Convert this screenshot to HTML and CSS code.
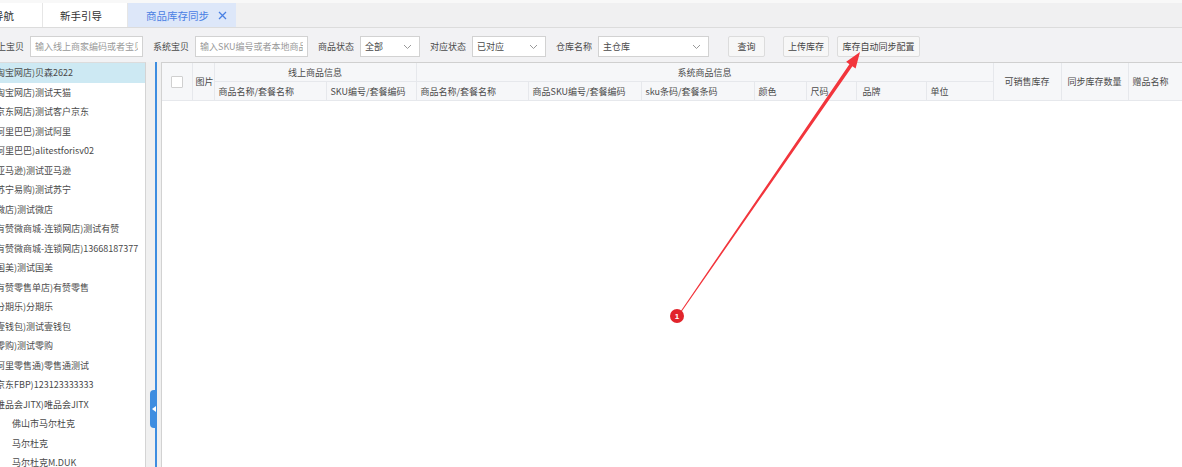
FILE: index.html
```html
<!DOCTYPE html>
<html lang="zh-CN">
<head>
  <meta charset="UTF-8" />
  <title>商品库存同步</title>
  <link rel="stylesheet" href="styles.css">
</head>
<body>
  <div class="tabs">
    <div class="tab tab-home">导航</div>
    <div class="tab tab-guide">新手引导</div>
    <div class="tab active">商品库存同步
      <svg class="close" width="9" height="9" viewBox="0 0 9 9"><path d="M1 1L8 8M8 1L1 8" stroke="#4a80e3" stroke-width="1.3" fill="none"/></svg>
    </div>
  </div>

  <div class="toolbar">
    <div class="field first">
      <span class="lbl">线上宝贝</span>
      <input class="txt" placeholder="输入线上商家编码或者宝贝名称">
    </div>
    <div class="field">
      <span class="lbl">系统宝贝</span>
      <input class="txt" placeholder="输入SKU编号或者本地商品名称">
    </div>
    <div class="field">
      <span class="lbl">商品状态</span>
      <div class="select w-sm"><span>全部</span><svg width="9" height="6" viewBox="0 0 9 6"><path d="M1 1L4.5 4.5L8 1" stroke="#999" fill="none"/></svg></div>
    </div>
    <div class="field">
      <span class="lbl">对应状态</span>
      <div class="select w-md"><span>已对应</span><svg width="9" height="6" viewBox="0 0 9 6"><path d="M1 1L4.5 4.5L8 1" stroke="#999" fill="none"/></svg></div>
    </div>
    <div class="field">
      <span class="lbl">仓库名称</span>
      <div class="select w-lg"><span>主仓库</span><svg width="9" height="6" viewBox="0 0 9 6"><path d="M1 1L4.5 4.5L8 1" stroke="#999" fill="none"/></svg></div>
    </div>
    <button class="btn btn-query">查询</button>
    <button class="btn btn-upload">上传库存</button>
    <button class="btn btn-config">库存自动同步配置</button>
  </div>

  <div class="main">
    <ul class="shops">
      <li class="shop on">(淘宝网店)贝森2622</li>
      <li class="shop">(淘宝网店)测试天猫</li>
      <li class="shop">(京东网店)测试客户京东</li>
      <li class="shop">(阿里巴巴)测试阿里</li>
      <li class="shop">(阿里巴巴)alitestforisv02</li>
      <li class="shop">(亚马逊)测试亚马逊</li>
      <li class="shop">(苏宁易购)测试苏宁</li>
      <li class="shop">(微店)测试微店</li>
      <li class="shop">(有赞微商城-连锁网店)测试有赞</li>
      <li class="shop">(有赞微商城-连锁网店)13668187377</li>
      <li class="shop">(国美)测试国美</li>
      <li class="shop">(有赞零售单店)有赞零售</li>
      <li class="shop">(分期乐)分期乐</li>
      <li class="shop">(壹钱包)测试壹钱包</li>
      <li class="shop">(零购)测试零购</li>
      <li class="shop">(阿里零售通)零售通测试</li>
      <li class="shop">(京东FBP)123123333333</li>
      <li class="shop">(唯品会JITX)唯品会JITX</li>
      <li class="shop sub">佛山市马尔杜克</li>
      <li class="shop sub">马尔杜克</li>
      <li class="shop sub">马尔杜克M.DUK</li>
    </ul>

    <div class="splitter">
      <div class="collapse"><svg width="4" height="6" viewBox="0 0 4 6"><path d="M4 0L0 3L4 6Z" fill="#fff"/></svg></div>
    </div>

    <div class="grid">
      <table>
        <colgroup>
          <col style="width:30px"><col style="width:22px">
          <col style="width:112px"><col style="width:90px">
          <col style="width:112px"><col style="width:113px"><col style="width:113px">
          <col style="width:52px"><col style="width:50px"><col style="width:70px"><col style="width:67px">
          <col style="width:68px"><col style="width:67px"><col style="width:80px">
        </colgroup>
        <tr>
          <th rowspan="2" class="chk"><span class="box"></span></th>
          <th rowspan="2" class="pic">图片</th>
          <th colspan="2" class="group">线上商品信息</th>
          <th colspan="7" class="group">系统商品信息</th>
          <th rowspan="2" class="mid">可销售库存</th>
          <th rowspan="2" class="mid">同步库存数量</th>
          <th rowspan="2">赠品名称</th>
        </tr>
        <tr>
          <th>商品名称/套餐名称</th>
          <th>SKU编号/套餐编码</th>
          <th>商品名称/套餐名称</th>
          <th>商品SKU编号/套餐编码</th>
          <th>sku条码/套餐条码</th>
          <th>颜色</th>
          <th>尺码</th>
          <th class="wide">品牌</th>
          <th>单位</th>
        </tr>
      </table>
    </div>
  </div>

  <svg class="annot" width="1182" height="467" viewBox="0 0 1182 467">
    <polygon points="678.4,316.3 852.4,66.2 855.6,68.6 860,52 846.2,61.8 849.4,64.2 677.6,315.7" fill="#f2353c"/>
    <circle cx="677" cy="316" r="7" fill="#e1242b"/>
    <text x="677" y="319" text-anchor="middle" font-size="8" font-weight="bold" fill="#fff" font-family="Liberation Sans, sans-serif">1</text>
  </svg>
</body>
</html>
```

FILE: styles.css
```css
body {
  margin: 0;
  height: 467px;
  overflow: hidden;
  position: relative;
  font-family: "Noto Sans CJK SC", "Noto Sans", sans-serif;
  font-size: 9px;
  color: #4a4a4a;
  background-color: #fff;
}

/* tab bar */
.tabs {
  display: flex;
  height: 24px;
  border-top: 3px solid #f8f8f8;
  border-bottom: 1px solid #dcdcdc;
  background-color: #f0f0f1;
}

.tab {
  display: flex;
  align-items: center;
  background-color: #fff;
  border-right: 1px solid #e6e6e6;
  font-size: 10.5px;
  color: #333;
  white-space: nowrap;
}

.tab-home {
  margin-left: -8px;
  padding: 0 28px 0 1px;
}

.tab-guide {
  padding: 0 25px 0 17px;
}

.tab.active {
  padding: 0 9px 0 18px;
  background-color: #dde7f9;
  color: #4a80e3;
  border-right: none;
}

.close {
  margin-left: 9px;
}

/* search bar */
.toolbar {
  display: flex;
  align-items: flex-start;
  height: 34px;
  padding-top: 8px;
  box-sizing: border-box;
  background-color: #f2f2f4;
}

.field {
  display: flex;
  align-items: center;
  gap: 6px;
  margin-right: 10px;
}

.field.first {
  margin-left: -12px;
}

.lbl {
  line-height: 21px;
  white-space: nowrap;
}

.txt {
  width: 113px;
  height: 21px;
  box-sizing: border-box;
  border: 1px solid #d2d2d2;
  padding: 0 4px;
  font-family: inherit;
  font-size: 9px;
  color: #333;
  background-color: #fff;
  outline: none;
}

.txt::placeholder {
  color: #999;
}

.select {
  display: flex;
  align-items: center;
  justify-content: space-between;
  height: 21px;
  box-sizing: border-box;
  border: 1px solid #d2d2d2;
  padding: 0 7px 0 4px;
  background-color: #fff;
}

.w-sm { width: 60px; }
.w-md { width: 74px; }
.w-lg { width: 111px; }

.btn {
  height: 21px;
  box-sizing: border-box;
  border: 1px solid #dcdcdc;
  border-radius: 2px;
  background-color: #f7f7f7;
  font-family: inherit;
  font-size: 9px;
  color: #444;
  padding: 0;
}

.btn-query { width: 37px; margin-left: 9px; }
.btn-upload { width: 46px; margin-left: 18px; }
.btn-config { width: 83px; margin-left: 8px; }

/* content */
.main {
  display: flex;
  height: 405px;
}

.shops {
  list-style: none;
  margin: 0;
  padding: 0;
  width: 146px;
  flex-shrink: 0;
  box-sizing: border-box;
  border-top: 1px solid #dcdcdc;
  border-right: 1px solid #d4d4d4;
  background-color: #fff;
}

.shop {
  height: 19.5px;
  line-height: 19.5px;
  white-space: nowrap;
  overflow: hidden;
  text-indent: -7px;
}

.shop.on {
  background-color: #cde9f3;
}

.shop.sub {
  text-indent: 12px;
}

.splitter {
  width: 15px;
  flex-shrink: 0;
  position: relative;
  background: linear-gradient(to right, #f0f0f0 9px, #3d8de0 9px, #3d8de0 11px, #f0f0f0 11px);
}

.collapse {
  position: absolute;
  left: 4px;
  top: 328px;
  width: 7px;
  height: 38px;
  border-radius: 4px 0 0 4px;
  background-color: #3d8de0;
  display: flex;
  align-items: center;
  justify-content: center;
}

.grid {
  flex: 1;
  overflow: hidden;
  border-top: 1px solid #d0d0d0;
  border-left: 1px solid #d2d2d2;
  background-color: #fff;
}

.grid table {
  border-collapse: collapse;
  table-layout: fixed;
  width: 1046px;
}

.grid th {
  height: 18px;
  padding: 0 4px;
  border: 1px solid #e6e8ec;
  background-color: #f6f7f9;
  font-weight: normal;
  text-align: left;
  white-space: nowrap;
  overflow: hidden;
}

.grid tr:first-child th {
  border-top: none;
}

.grid th.chk {
  border-left: none;
  text-align: center;
  padding: 0;
}

.box {
  display: inline-block;
  width: 10px;
  height: 10px;
  border: 1px solid #d0d0d0;
  border-radius: 1px;
  background-color: #fff;
  vertical-align: middle;
}

.grid th.pic {
  padding: 0 0 0 3px;
}

.grid th.group,
.grid th.mid {
  text-align: center;
}

.grid th.wide {
  padding-left: 6px;
}

.annot {
  position: absolute;
  left: 0;
  top: 0;
  pointer-events: none;
}
```
